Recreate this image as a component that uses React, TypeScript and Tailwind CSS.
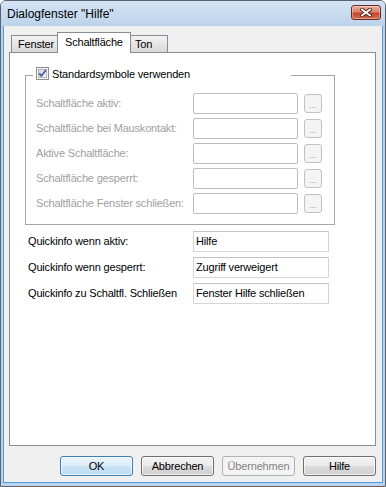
import type { ReactNode } from 'react';

const DISABLED_ROWS = [
  'Schaltfläche aktiv:',
  'Schaltfläche bei Mauskontakt:',
  'Aktive Schaltfläche:',
  'Schaltfläche gesperrt:',
  'Schaltfläche Fenster schließen:',
];

const QUICKINFO_ROWS = [
  { label: 'Quickinfo wenn aktiv:', value: 'Hilfe' },
  { label: 'Quickinfo wenn gesperrt:', value: 'Zugriff verweigert' },
  { label: 'Quickinfo zu Schaltfl. Schließen', value: 'Fenster Hilfe schließen' },
];

type ButtonKind = 'default' | 'normal' | 'disabled';

function CloseButton() {
  return (
    <div className="mt-[4px] flex h-[15px] w-[30px] items-center justify-center rounded-[3px] border border-[#6b2b1f] bg-[linear-gradient(#eab0a0,#d9836e_45%,#c4472c_55%,#d66c50)] shadow-[inset_0_0_0_1px_rgba(255,255,255,0.35)]">
      <svg width="12" height="9" viewBox="0 0 12 9">
        <path d="M2 1.5 L10 7.5 M10 1.5 L2 7.5" stroke="#4a1d14" strokeWidth="3.6" strokeLinecap="square" />
        <path d="M2 1.5 L10 7.5 M10 1.5 L2 7.5" stroke="#ffffff" strokeWidth="1.9" strokeLinecap="square" />
      </svg>
    </div>
  );
}

function Checkbox() {
  return (
    <svg width="13" height="13" viewBox="0 0 13 13" className="mt-[1px] shrink-0">
      <defs>
        <linearGradient id="cbfill" x1="0" y1="0" x2="1" y2="1">
          <stop offset="0" stopColor="#d6d6d6" />
          <stop offset="1" stopColor="#fbfbfb" />
        </linearGradient>
      </defs>
      <rect x="0.5" y="0.5" width="12" height="12" fill="#f4f4f4" stroke="#8e8f8f" />
      <rect x="2.5" y="2.5" width="8" height="8" fill="url(#cbfill)" stroke="#b5b6b7" />
      <path d="M3.2 6.4 L5.4 8.8 L10 3" fill="none" stroke="#4a5fa6" strokeWidth="1.9" />
    </svg>
  );
}

function Tab({ label, active, className }: { label: string; active?: boolean; className: string }) {
  return (
    <div
      className={
        active
          ? 'relative z-[1] -mb-px flex h-[21px] w-[74px] items-center border-x border-t border-[#898c95] bg-white pl-[7px] pb-[1px] ' + className
          : 'flex h-[17px] items-center border-t border-[#898c95] bg-linear-to-b from-[#f3f3f3] to-[#d9d9d9] ' + className
      }
    >
      {label}
    </div>
  );
}

function DialogButton({ kind, children }: { kind: ButtonKind; children: ReactNode }) {
  const look =
    kind === 'default'
      ? 'border-[#3c7fb1] bg-[linear-gradient(#e9f4fc,#dcedf9_50%,#cbe5f6_50%,#bcdcf1)] text-black shadow-[inset_0_0_0_1px_rgba(255,255,255,0.7)]'
      : kind === 'disabled'
        ? 'border-[#adb2b5] bg-[#f4f4f4] text-[#838383]'
        : 'border-[#707070] bg-[linear-gradient(#f2f2f2,#ebebeb_50%,#dddddd_50%,#cfcfcf)] text-black shadow-[inset_0_0_0_1px_rgba(255,255,255,0.7)]';
  return (
    <div className={'flex h-[20px] w-[73px] items-center justify-center rounded-[3px] border ' + look}>
      {children}
    </div>
  );
}

export default function App() {
  return (
    <div className="h-[487px] w-[386px] select-none font-['Liberation_Sans',Arial,sans-serif] text-[11px] tracking-[-0.18px] text-black">
      <div className="flex h-full flex-col overflow-hidden rounded-t-[6px] border border-[#56626f]">
        {/* Title bar */}
        <div className="flex h-[25px] shrink-0 items-start justify-between bg-linear-to-b from-[#d3e3f4] to-[#bdd3eb] pl-[6px] pr-[4px]">
          <span className="mt-[6px] text-[12px] leading-[14px] tracking-normal">Dialogfenster "Hilfe"</span>
          <CloseButton />
        </div>

        {/* Frame */}
        <div className="flex flex-1 flex-col bg-[#bdd3eb] px-[2px] pb-[3px]">
          <div className="flex flex-1 flex-col border-x border-b border-[#4a9be0] bg-[#f0f0f0] pl-[5px] pr-[6px] pt-[6px]">
            {/* Tabs */}
            <div className="flex h-[20px] items-end pl-[2px]">
              <Tab label="Fenster" className="w-[46px] border-l pl-[6px]" />
              <Tab label="Schaltfläche" active className="" />
              <Tab label="Ton" className="w-[37px] border-r pl-[4px]" />
            </div>

            {/* Tab panel */}
            <div className="h-[394px] border border-[#898c95] bg-white">
              <fieldset className="ml-[15px] mt-[13px] w-[310px] border border-[#a5a5a5] p-0">
                <legend className="ml-[7px] w-[258px] p-0 pl-[3px]">
                  <div className="flex h-[18px] items-start">
                    <Checkbox />
                    <span className="ml-[3px] mt-[2px] leading-[13px]">Standardsymbole verwenden</span>
                  </div>
                </legend>
                <div className="flex flex-col gap-[4px] pb-[10px] pl-[10px] pt-[9px]">
                  {DISABLED_ROWS.map(label => (
                    <div key={label} className="flex h-[21px] items-center">
                      <span className="w-[157px] text-[#a0a0a0]">{label}</span>
                      <div className="h-[21px] w-[105px] rounded-[2px] border border-[#bdbdbd] bg-white" />
                      <div className="ml-[6px] flex h-[19px] w-[18px] items-center justify-center rounded-[3px] border border-[#c2c2c2] bg-[#f4f4f4] pt-[4px] text-[9px] tracking-normal text-[#a49aa8]">
                        ...
                      </div>
                    </div>
                  ))}
                </div>
              </fieldset>

              <div className="mt-[6px] flex flex-col gap-[5px] pl-[18px]">
                {QUICKINFO_ROWS.map(row => (
                  <div key={row.label} className="flex h-[21px] items-center">
                    <span className="w-[165px]">{row.label}</span>
                    <div className="flex h-[21px] w-[136px] items-center border border-[#d6d6d6] border-t-[#c4c4c4] bg-white pl-[2px]">
                      {row.value}
                    </div>
                  </div>
                ))}
              </div>
            </div>

            {/* Dialog buttons */}
            <div className="mt-[10px] flex justify-end gap-[8px]">
              <DialogButton kind="default">OK</DialogButton>
              <DialogButton kind="normal">Abbrechen</DialogButton>
              <DialogButton kind="disabled">Übernehmen</DialogButton>
              <DialogButton kind="normal">Hilfe</DialogButton>
            </div>
          </div>
        </div>
      </div>
    </div>
  );
}
